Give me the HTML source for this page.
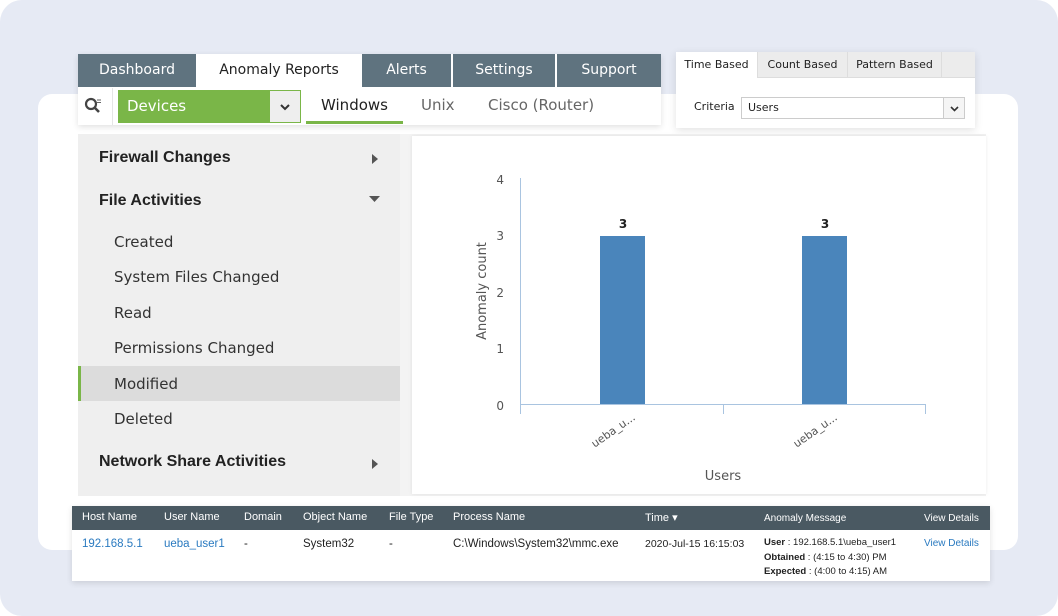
<!DOCTYPE html>
<html><head><meta charset="utf-8"><style>
*{margin:0;padding:0;box-sizing:border-box}
body{width:1058px;height:616px;background:#fff;font-family:"DejaVu Sans","Liberation Sans",sans-serif;position:relative;overflow:hidden}
.a{position:absolute}
.bg{left:0;top:0;width:1058px;height:616px;background:#e6eaf4;border-radius:22px}
.inner{left:38px;top:94px;width:980px;height:456px;background:#fff;border-radius:14px}
.tab{top:54px;height:33px;background:#5f737f;color:#fff;font-size:14px;text-align:center;line-height:33px}
.menu{font-size:15px;color:#333}
.b{font-family:"Liberation Sans",sans-serif;font-weight:bold;font-size:16px;color:#222}
.th{color:#fff;font-size:10px;top:511px;font-family:"Liberation Sans",sans-serif;font-size:11px}
.td{font-size:10.5px;top:538px;color:#222;font-family:"Liberation Sans",sans-serif;font-size:11.5px}
</style></head><body>
<div class="a bg"></div>
<div class="a inner"></div>
<div class="a" style="left:78px;top:54px;width:583px;height:71px;background:#fff;box-shadow:0 2px 6px rgba(0,0,0,.12)"></div>
<div class="a tab" style="left:78px;width:118px">Dashboard</div>
<div class="a tab" style="left:197px;width:164px;background:#fff;color:#222">Anomaly Reports</div>
<div class="a tab" style="left:362px;width:89px">Alerts</div>
<div class="a tab" style="left:453px;width:102px">Settings</div>
<div class="a tab" style="left:557px;width:104px">Support</div>
<svg class="a" style="left:84px;top:97px" width="20" height="18" viewBox="0 0 20 18"><circle cx="7" cy="7" r="5" fill="none" stroke="#444" stroke-width="2.2"/><line x1="10.5" y1="10.5" x2="15" y2="15" stroke="#444" stroke-width="2.6"/><line x1="13" y1="3" x2="17" y2="3" stroke="#666" stroke-width="1"/><line x1="13" y1="5.5" x2="17" y2="5.5" stroke="#666" stroke-width="1"/></svg>
<div class="a" style="left:112px;top:88px;width:1px;height:37px;background:#e5e5e5"></div>
<div class="a" style="left:118px;top:90px;width:183px;height:33px;background:#7ab648;border:1px solid #7ab648;color:#fff;font-size:15px;line-height:31px;padding-left:8px">Devices</div>
<div class="a" style="left:270px;top:91px;width:30px;height:31px;background:#eeeeee"><svg width="30" height="31"><path d="M11 14l4 4 4-4" fill="none" stroke="#333" stroke-width="2"/></svg></div>
<div class="a" style="left:306px;top:96px;width:97px;text-align:center;font-size:15px;color:#222">Windows</div>
<div class="a" style="left:306px;top:121px;width:97px;height:3px;background:#7ab648"></div>
<div class="a" style="left:421px;top:96px;font-size:15px;color:#666">Unix</div>
<div class="a" style="left:488px;top:96px;font-size:15px;color:#666">Cisco (Router)</div>
<div class="a" style="left:676px;top:52px;width:299px;height:76px;background:#fff;box-shadow:0 2px 8px rgba(0,0,0,.12)"></div>
<div class="a" style="left:757px;top:52px;width:218px;height:26px;background:#ececec;border-bottom:1px solid #ddd"></div>
<div class="a" style="left:676px;top:58px;width:81px;text-align:center;font-size:11px;color:#222">Time Based</div>
<div class="a" style="left:757px;top:52px;width:90px;height:26px;border-left:1px solid #ddd;text-align:center;line-height:26px;font-size:11px;color:#222">Count Based</div>
<div class="a" style="left:847px;top:52px;width:95px;height:26px;border-left:1px solid #ddd;border-right:1px solid #ddd;text-align:center;line-height:26px;font-size:11px;color:#222">Pattern Based</div>
<div class="a" style="left:694px;top:100px;font-size:11px;color:#222">Criteria</div>
<div class="a" style="left:741px;top:97px;width:224px;height:22px;border:1px solid #ccc;font-size:11px;line-height:20px;padding-left:6px;color:#222">Users</div>
<div class="a" style="left:943px;top:98px;width:21px;height:20px;border-left:1px solid #ccc;background:#f5f5f5"><svg width="21" height="20"><path d="M7 9l3.5 3.5L14 9" fill="none" stroke="#333" stroke-width="1.6"/></svg></div>
<div class="a" style="left:78px;top:134px;width:334px;height:362px;background:#efefef"></div>
<div class="a" style="left:400px;top:134px;width:586px;height:362px;background:#f3f3f3"></div>
<div class="a" style="left:78px;top:366px;width:322px;height:35px;background:#dcdcdc"></div>
<div class="a" style="left:78px;top:366px;width:3px;height:35px;background:#7ab648"></div>
<div class="a b" style="left:99px;top:149px">Firewall Changes</div>
<div class="a b" style="left:99px;top:192px">File Activities</div>
<div class="a menu" style="left:114px;top:233px">Created</div>
<div class="a menu" style="left:114px;top:268px">System Files Changed</div>
<div class="a menu" style="left:114px;top:304px">Read</div>
<div class="a menu" style="left:114px;top:339px">Permissions Changed</div>
<div class="a menu" style="left:114px;top:375px">Modified</div>
<div class="a menu" style="left:114px;top:410px">Deleted</div>
<div class="a b" style="left:99px;top:453px">Network Share Activities</div>
<svg class="a" style="left:371px;top:154px" width="8" height="10"><path d="M1 0l6 5-6 5z" fill="#555"/></svg>
<svg class="a" style="left:369px;top:196px" width="11" height="7"><path d="M0 0h11L5.5 6z" fill="#555"/></svg>
<svg class="a" style="left:371px;top:459px" width="8" height="10"><path d="M1 0l6 5-6 5z" fill="#555"/></svg>
<div class="a" style="left:412px;top:136px;width:574px;height:358px;background:#fff;box-shadow:0 0 4px rgba(0,0,0,.08)"></div>
<svg class="a" style="left:412px;top:136px" width="574" height="358" font-family="DejaVu Sans, Liberation Sans, sans-serif">
<line x1="108.5" y1="42" x2="108.5" y2="278" stroke="#a9c4e0"/>
<line x1="108" y1="268.5" x2="514" y2="268.5" stroke="#a9c4e0"/>
<line x1="311.5" y1="268" x2="311.5" y2="278" stroke="#a9c4e0"/>
<line x1="513.5" y1="268" x2="513.5" y2="278" stroke="#a9c4e0"/>
<g font-size="12" fill="#555" text-anchor="end"><text x="92" y="48">4</text><text x="92" y="104">3</text><text x="92" y="161">2</text><text x="92" y="217">1</text><text x="92" y="274">0</text></g>
<rect x="188" y="100" width="45" height="168" fill="#4a85bb"/>
<rect x="390" y="100" width="45" height="168" fill="#4a85bb"/>
<g font-size="12" font-weight="bold" fill="#222" text-anchor="middle"><text x="211" y="92">3</text><text x="413" y="92">3</text></g>
<text transform="translate(74,155) rotate(-90)" font-size="13" fill="#555" text-anchor="middle">Anomaly count</text>
<g font-size="11" fill="#555" text-anchor="end"><text transform="translate(224,283) rotate(-35)">ueba_u...</text><text transform="translate(426,283) rotate(-35)">ueba_u...</text></g>
<text x="311" y="344" font-size="13" fill="#555" text-anchor="middle">Users</text>
</svg>
<div class="a" style="left:72px;top:506px;width:918px;height:75px;background:#fff;box-shadow:0 2px 6px rgba(0,0,0,.12)"></div>
<div class="a" style="left:72px;top:506px;width:918px;height:24px;background:#4a5962"></div>
<div class="a th" style="left:82px">Host Name</div>
<div class="a th" style="left:164px">User Name</div>
<div class="a th" style="left:244px">Domain</div>
<div class="a th" style="left:303px">Object Name</div>
<div class="a th" style="left:389px">File Type</div>
<div class="a th" style="left:453px">Process Name</div>
<div class="a th" style="left:645px">Time &#9662;</div>
<div class="a th" style="left:764px;top:513px;font-size:10px">Anomaly Message</div>
<div class="a th" style="left:924px;top:513px;font-size:10px">View Details</div>
<div class="a td" style="left:82px;color:#2a7ac0">192.168.5.1</div>
<div class="a td" style="left:164px;color:#2a7ac0">ueba_user1</div>
<div class="a td" style="left:244px">-</div>
<div class="a td" style="left:303px">System32</div>
<div class="a td" style="left:389px">-</div>
<div class="a td" style="left:453px">C:\Windows\System32\mmc.exe</div>
<div class="a td" style="left:645px;font-size:10.5px">2020-Jul-15 16:15:03</div>
<div class="a td" style="left:764px;font-size:9.5px;line-height:14.5px;top:536px"><b>User</b> : 192.168.5.1\ueba_user1<br><b>Obtained</b> : (4:15 to 4:30) PM<br><b>Expected</b> : (4:00 to 4:15) AM</div>
<div class="a td" style="left:924px;color:#2a7ac0;font-size:10px">View Details</div>
</body></html>
